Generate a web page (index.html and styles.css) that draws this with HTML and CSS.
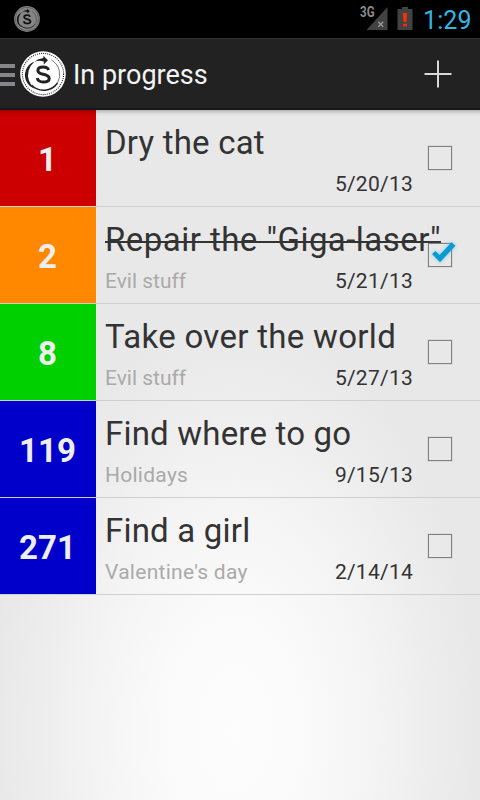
FILE: index.html
```
<!DOCTYPE html>
<html lang="en">
<head>
<meta charset="utf-8">
<title>In progress</title>
<link rel="stylesheet" href="styles.css">
</head>
<body>
<svg width="0" height="0" class="defs" aria-hidden="true">
  <symbol id="coin" viewBox="0 0 46 46">
    <circle cx="23" cy="23" r="22.8" fill="currentColor"/>
    <circle class="ink" cx="23" cy="23" r="20.6" fill="none" stroke-width="1.1" stroke-dasharray="1 1.1"/>
    <path class="ink-fill" d="M14.8 37.8 A17.3 17.3 0 0 1 23.4 6.9 L23.3 4.8 L28 9.2 L23.7 13.4 L23.8 10.5 A13.6 13.6 0 0 0 14.8 37.8 Z"/>
    <path class="ink" d="M11.5 34 A16.8 16.8 0 0 0 37.5 32" fill="none" stroke-width="1.4"/>
    <path class="ink" d="M37.5 32 A17 17 0 0 0 31.5 9" fill="none" stroke-width=".6"/>
    <path class="ink" d="M28.6 19 C27.8 16.6 25.8 16 23 16 C19.5 16 17.9 17.4 17.9 19.4 C17.9 21.8 20 22.5 23.3 23.3 C26.8 24.1 29.2 25.1 29.2 27.5 C29.2 29.9 26.8 31 23.3 31 C19.8 31 17.8 29.6 17.2 27" fill="none" stroke-width="3"/>
  </symbol>
</svg>
<header class="status">
  <svg class="status-coin"><use href="#coin"/></svg>
  <svg class="signal" width="28" height="32" viewBox="0 -3 28 32">
    <path d="M27.5 1 V24 H6.5 Z" fill="#424242"/>
    <path d="M18.3 15.8 L23.2 20.8 M23.2 15.8 L18.3 20.8" stroke="#999" stroke-width="1.3"/>
    <text x="0" y="11" textLength="14.5" lengthAdjust="spacingAndGlyphs">3G</text>
  </svg>
  <svg class="battery" width="16" height="25" viewBox="0 0 16 25">
    <path d="M5 1 H11 V3 H15.5 V24 H.5 V3 H5 Z" fill="#424242"/>
    <path d="M6 7 H10 L9.4 16 H6.6 Z" fill="#ff3000"/>
    <rect x="6" y="17.7" width="4" height="2.6" rx="1" fill="#ff3000"/>
  </svg>
  <span class="clock">1:29</span>
</header>
<nav class="bar">
  <span class="drawer"><i></i><i></i><i></i></span>
  <svg class="logo"><use href="#coin"/></svg>
  <h1>In progress</h1>
  <svg class="add" width="28" height="28" viewBox="0 0 28 28"><path d="M14 .5 V27.5 M.5 14 H27.5" stroke="#d8d8d8" stroke-width="2"/></svg>
</nav>
<main class="list">
  <section class="row">
    <div class="priority red">1</div>
    <div class="task"><div class="title t1">Dry the cat</div><div class="meta"><span></span><time>5/20/13</time></div></div>
    <div class="box"></div>
  </section>
  <section class="row">
    <div class="priority orange">2</div>
    <div class="task"><div class="title t2"><span class="done">Repair the "Giga-laser"</span></div><div class="meta"><span>Evil stuff</span><time>5/21/13</time></div></div>
    <div class="box"><svg class="check" width="34" height="30" viewBox="0 0 34 30"><path d="M7 16 L10.5 13 L14.6 17 L26.5 4.3 L30.5 7.7 L15 24.2 Z" fill="#0c9bd0"/></svg></div>
  </section>
  <section class="row">
    <div class="priority green">8</div>
    <div class="task"><div class="title t3">Take over the world</div><div class="meta"><span>Evil stuff</span><time>5/27/13</time></div></div>
    <div class="box"></div>
  </section>
  <section class="row">
    <div class="priority blue">119</div>
    <div class="task"><div class="title t4">Find where to go</div><div class="meta"><span class="roomy">Holidays</span><time>9/15/13</time></div></div>
    <div class="box"></div>
  </section>
  <section class="row">
    <div class="priority blue">271</div>
    <div class="task"><div class="title t5">Find a girl</div><div class="meta"><span class="roomy">Valentine's day</span><time>2/14/14</time></div></div>
    <div class="box"></div>
  </section>
</main>
</body>
</html>
```
FILE: styles.css
```
* { box-sizing: border-box; }
body {
  margin: 0;
  width: 480px;
  height: 800px;
  overflow: hidden;
  display: flex;
  flex-direction: column;
  font-family: Roboto, sans-serif;
  color: #333;
  background: radial-gradient(ellipse 245px 415px at 235px 730px, #fdfdfd 0, #fafafa 30%, #f4f4f4 57%, #ececec 84%, #e8e8e8 100%);
}
.defs { position: absolute; }
.ink { stroke: var(--ink); }
.ink-fill { fill: var(--ink); }
.status {
  height: 38px;
  flex: none;
  display: flex;
  align-items: center;
  background: #000;
}
.status-coin { width: 26px; height: 26px; margin-left: 14px; color: #858585; --ink: #111; }
.signal { margin-left: auto; }
.signal text { font: bold 14px Roboto, sans-serif; fill: #8c8c8c; }
.battery { margin-left: 9px; margin-top: -2px; }
.clock { width: 57px; margin: 3px 0 0 10px; font-size: 25px; letter-spacing: .1px; line-height: 35px; color: #33b5e5; white-space: nowrap; }
.bar {
  height: 72px;
  flex: none;
  display: flex;
  align-items: center;
  background: #222;
  border-top: 1px solid #303030;
  border-bottom: 2px solid #181818;
}
.drawer { width: 15px; display: grid; gap: 5px; margin-top: 2px; }
.drawer i { height: 4px; background: #85858a; }
.logo { width: 46px; height: 46px; margin-left: 5px; color: #fff; --ink: #222; }
h1 { margin: 2px 0 0 7px; font-size: 27px; line-height: 32px; font-weight: 400; color: #f3f3f3; white-space: nowrap; }
.add { margin-left: auto; margin-right: 28px; }
.list { box-shadow: inset 0 6px 5px -5px rgba(0, 0, 0, .35); }
.row { height: 97px; display: flex; border-bottom: 1px solid #cfcfcf; }
.priority {
  width: 96px;
  flex: none;
  padding-right: 1px;
  text-align: center;
  font-size: 33px;
  font-weight: 700;
  line-height: 99px;
  height: 96px;
  color: #eee;
}
.red { background: #c00; box-shadow: inset 0 6px 5px -5px rgba(0, 0, 0, .35); }
.orange { background: #f80; }
.green { background: #00cf00; }
.blue { background: #0000ca; }
.task { width: 308px; margin-left: 9px; padding-top: 13px; flex: none; }
.title { font-size: 33px; line-height: 39px; white-space: nowrap; letter-spacing: .2px; }
.t2 { letter-spacing: .46px; }
.t3 { letter-spacing: .31px; }
.done { position: relative; display: inline-block; }
.done::after { content: ""; position: absolute; left: 0; right: 0; top: 21px; height: 2px; background: #333; }
.meta { margin-top: 10px; display: flex; justify-content: space-between; font-size: 21px; line-height: 25px; color: #aaa; }
.meta time { color: #333; letter-spacing: .25px; }
.roomy { letter-spacing: .27px; }
.box { position: relative; width: 24px; height: 24px; margin: 36px 0 0 15px; border: 1px solid #808080; outline: 1px solid rgba(133, 133, 133, .12); }
.check { position: absolute; left: -4px; top: -6px; filter: drop-shadow(0 0 2px rgba(80, 195, 240, .7)); }
```
